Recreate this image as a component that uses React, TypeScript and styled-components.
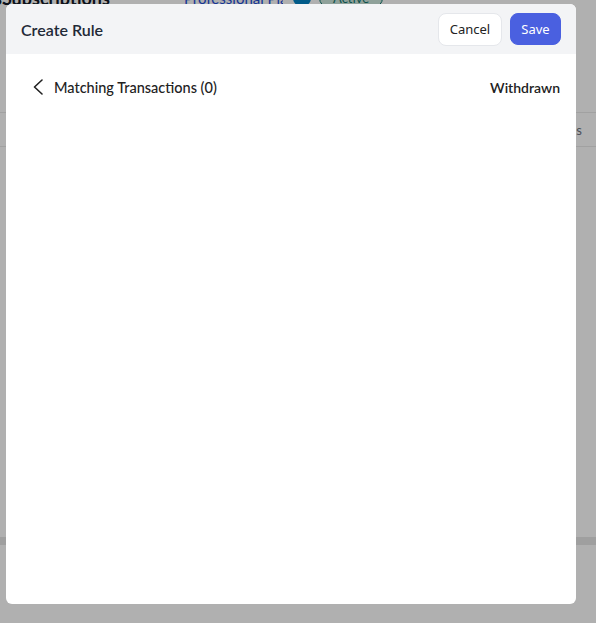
import React from 'react';
import styled, {createGlobalStyle} from "styled-components";

const GlobalStyle = createGlobalStyle`
  html, body {
    margin: 0;
    padding: 0;
    background: #ffffff;
    font-family: Lato, "Noto Sans", Arial, sans-serif;
    overflow: hidden;
  }
  * {
    box-sizing: border-box;
  }
`

// page behind the dialog (scrolled a little, mostly hidden)
const Page = styled.div`
  width: 596px;
  height: 640px;
  transform: translateY(-14px);
  display: flex;
  flex-direction: column;
`
const PageTitleRow = styled.div`
  height: 24px;
  flex-shrink: 0;
  display: flex;
  align-items: center;
  gap: 10px;
  white-space: nowrap;
`
const PageTitle = styled.h2`
  margin: 0 0 0 -6px;
  font-size: 18px;
  font-weight: 700;
  color: #111827;
  width: 180px;
`
const PlanLink = styled.span`
  font-size: 15px;
  color: #1d4ed8;
  width: 99px;
  overflow: hidden;
`
const InfoDot = styled.span`
  width: 18px;
  height: 18px;
  flex-shrink: 0;
  border-radius: 50%;
  background: #0284c7;
`
const StatusPill = styled.span`
  padding: 1px 13px;
  margin-left: -2px;
  border: 1px solid #0f766e;
  border-radius: 999px;
  background: #cfe9df;
  color: #0f766e;
  font-size: 13px;
`
const TableHead = styled.div`
  margin-top: 102px;
  height: 35px;
  flex-shrink: 0;
  border-top: 1px solid #eaeaea;
  border-bottom: 1px solid #eaeaea;
  display: flex;
  align-items: center;
  justify-content: flex-end;
  padding-right: 14px;
  font-size: 13px;
  color: #6b7280;
`
const TableFill = styled.div`
  height: 390px;
  flex-shrink: 0;
`
const FooterBand = styled.div`
  height: 8px;
  flex-shrink: 0;
  background: #e6e6e6;
`

const Overlay = styled.div`
  position: fixed;
  inset: 0;
  background: rgba(0, 0, 0, 0.31);
`

const Modal = styled.div`
  position: fixed;
  top: 4px;
  left: 6px;
  width: 570px;
  height: 600px;
  background: #ffffff;
  border-radius: 6px;
  overflow: hidden;
  display: flex;
  flex-direction: column;
`
const ModalHeader = styled.div`
  height: 50px;
  background: #f3f4f6;
  display: flex;
  align-items: center;
  justify-content: space-between;
  padding: 0 15px;
`
const ModalTitle = styled.h3`
  margin: 0;
  font-size: 16px;
  font-weight: 600;
  color: #1f2937;
`
const Actions = styled.div`
  display: flex;
  gap: 8px;
  align-items: center;
`
const Button = styled.button<{ $primary?: boolean }>`
  height: ${p => p.$primary ? 32 : 33}px;
  width: ${p => p.$primary ? 51 : 64}px;
  padding: 0;
  border-radius: 8px;
  font-family: "Noto Sans", Arial, sans-serif;
  font-size: 13px;
  cursor: pointer;
  border: 1px solid ${p => p.$primary ? '#4a60e0' : '#e5e7eb'};
  background: ${p => p.$primary ? '#4a60e0' : '#ffffff'};
  color: ${p => p.$primary ? '#ffffff' : '#222222'};
`
const ModalBody = styled.div`
  flex: 1;
  padding: 22px 16px 0 25px;
`
const BackRow = styled.div`
  height: 22px;
  display: flex;
  align-items: center;
  justify-content: space-between;
`
const BackButton = styled.button`
  display: flex;
  align-items: center;
  gap: 9px;
  padding: 0;
  border: none;
  background: none;
  cursor: pointer;
  font-family: Lato, "Noto Sans", Arial, sans-serif;
  font-size: 14.5px;
  font-weight: 500;
  color: #222222;
`
const StatusLabel = styled.span`
  font-size: 14px;
  font-weight: 600;
  color: #222222;
`

const App = () => {
    return (
        <>
            <GlobalStyle/>
            <Page>
                <PageTitleRow>
                    <PageTitle>sSubscriptions</PageTitle>
                    <PlanLink>Professional Plan</PlanLink>
                    <InfoDot/>
                    <StatusPill>Active</StatusPill>
                </PageTitleRow>
                <TableHead>Status</TableHead>
                <TableFill/>
                <FooterBand/>
            </Page>
            <Overlay/>
            <Modal>
                <ModalHeader>
                    <ModalTitle>Create Rule</ModalTitle>
                    <Actions>
                        <Button>Cancel</Button>
                        <Button $primary>Save</Button>
                    </Actions>
                </ModalHeader>
                <ModalBody>
                    <BackRow>
                        <BackButton>
                            <svg width="14" height="16" viewBox="0 0 14 16" fill="none">
                                <path d="M11 1L3.5 8L11 15" stroke="#222" strokeWidth="1.6" strokeLinecap="round" strokeLinejoin="round"/>
                            </svg>
                            Matching Transactions (0)
                        </BackButton>
                        <StatusLabel>Withdrawn</StatusLabel>
                    </BackRow>
                </ModalBody>
            </Modal>
        </>
    );
};

export default App;
